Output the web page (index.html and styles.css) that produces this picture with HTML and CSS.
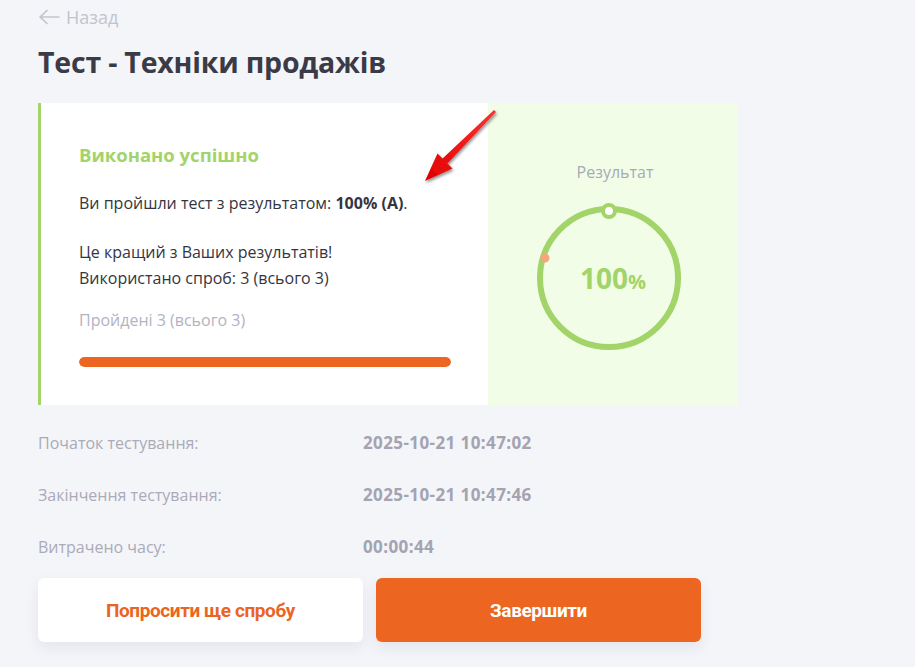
FILE: index.html
```html
<!DOCTYPE html>
<html lang="uk">
<head>
<meta charset="utf-8">
<title>Тест - Техніки продажів</title>
<link rel="stylesheet" href="styles.css">
</head>
<body>
<div class="page">
  <a class="back" href="#">
    <svg class="back-icon" width="22" height="16" viewBox="0 0 22 16"><path d="M9 1.5 L2 8 L9 14.5 M2 8 H21" fill="none" stroke="#c3c3cf" stroke-width="1.7" stroke-linecap="round" stroke-linejoin="round"/></svg>
    <span>Назад</span>
  </a>
  <h1 class="title">Тест - Техніки продажів</h1>

  <div class="card">
    <div class="card-main">
      <div class="status">Виконано успішно</div>
      <p class="line">Ви пройшли тест з результатом: <b>100% (A)</b>.</p>
      <p class="line best">Це кращий з Ваших результатів!<br>Використано спроб: 3 (всього 3)</p>
      <p class="passed">Пройдені 3 (всього 3)</p>
      <div class="bar"><div class="bar-fill" style="width:100%"></div></div>
    </div>
    <div class="card-side">
      <div class="side-label">Результат</div>
      <div class="ring">
        <svg width="160" height="160" viewBox="0 0 160 160">
          <circle cx="80" cy="80" r="69" fill="none" stroke="#a2d469" stroke-width="6"/>
          <circle cx="80" cy="13" r="6" fill="#fff" stroke="#a2d469" stroke-width="4"/>
          <circle cx="16" cy="60" r="4.5" fill="#f7a47f"/>
        </svg>
        <div class="ring-value">100<span class="pct">%</span></div>
      </div>
    </div>
    <svg class="arrow" width="90" height="90" viewBox="0 0 90 90">
      <defs>
        <filter id="sh" x="-30%" y="-30%" width="160%" height="160%">
          <feDropShadow dx="1" dy="2" stdDeviation="1.6" flood-color="#000" flood-opacity="0.45"/>
        </filter>
        <linearGradient id="rg" x1="0" y1="1" x2="1" y2="0">
          <stop offset="0" stop-color="#e00000"/>
          <stop offset="1" stop-color="#ff3030"/>
        </linearGradient>
      </defs>
      <path d="M7 76 L19.5 48.5 L24.6 53.6 L76 5 L78 7 L29.4 58.4 L34.5 63.5 Z" fill="url(#rg)" filter="url(#sh)"/>
    </svg>
  </div>

  <div class="info">
    <div class="info-row"><span class="info-label">Початок тестування:</span><span class="info-value">2025-10-21 10:47:02</span></div>
    <div class="info-row"><span class="info-label">Закінчення тестування:</span><span class="info-value">2025-10-21 10:47:46</span></div>
    <div class="info-row"><span class="info-label">Витрачено часу:</span><span class="info-value">00:00:44</span></div>
  </div>

  <div class="actions">
    <button class="btn btn-light">Попросити ще спробу</button>
    <button class="btn btn-primary">Завершити</button>
  </div>
</div>
</body>
</html>
```
FILE: styles.css
```css
* { box-sizing: border-box; }
html, body { margin: 0; padding: 0; }
body {
  background: #f4f5f9;
  font-family: "Open Sans", "Noto Sans", sans-serif;
  color: #3a3a48;
  height: 667px;
  overflow: hidden;
}
.page {
  padding: 4px 0 0 38px;
  width: 738px;
}
.back {
  display: flex;
  align-items: center;
  gap: 6px;
  color: #c3c3cf;
  text-decoration: none;
  font-size: 18px;
  height: 26px;
}
.title {
  margin: 15px 0 0 0;
  font-size: 28.5px;
  font-weight: 700;
  color: #3b3b47;
  line-height: 34px;
  letter-spacing: -0.2px;
}
.card {
  position: relative;
  margin-top: 24px;
  width: 700px;
  height: 302px;
  display: flex;
}
.card-main {
  width: 450px;
  background: #fff;
  border-left: 3px solid #a2d469;
  padding: 38px 37px 0 38px;
}
.status {
  color: #a2d469;
  font-weight: 700;
  font-size: 18.5px;
  line-height: 28px;
}
.line {
  margin: 21px 0 0 0;
  font-size: 16px;
  line-height: 26px;
  color: #35353f;
}
.line b { font-weight: 700; }
.best { margin-top: 23px; }
.passed {
  margin: 16px 0 0 0;
  font-size: 16px;
  line-height: 26px;
  color: #b3b3c1;
}
.bar {
  margin-top: 24px;
  width: 372px;
  height: 10px;
  border-radius: 5px;
  background: #f1f1f4;
  overflow: hidden;
}
.bar-fill {
  height: 100%;
  background: #ec6521;
  border-radius: 5px;
}
.card-side {
  flex: 1;
  background: #f1fde7;
  display: flex;
  flex-direction: column;
  align-items: center;
  padding-top: 57px;
}
.side-label {
  color: #a9a9b6;
  font-size: 16px;
  line-height: 24px;
  margin-left: 4px;
}
.ring {
  position: relative;
  width: 160px;
  height: 160px;
  margin-top: 14px;
  margin-left: -8px;
}
.ring svg { display: block; }
.ring-value {
  position: absolute;
  inset: 0;
  display: flex;
  align-items: center;
  justify-content: center;
  color: #a2d469;
  font-weight: 700;
  font-size: 28px;
  padding-left: 8px;
  padding-top: 0;
}
.pct { font-size: 20px; margin-top: 6px; }
.arrow {
  position: absolute;
  left: 380px;
  top: 2px;
}
.info {
  margin-top: 25px;
  display: flex;
  flex-direction: column;
  gap: 26px;
}
.info-row {
  display: flex;
  align-items: baseline;
  font-size: 16px;
  line-height: 26px;
}
.info-label {
  width: 325px;
  color: #aaaab8;
}
.info-value {
  color: #a3a3b1;
  font-weight: 700;
  font-size: 17px;
  letter-spacing: 0.4px;
}
.actions {
  margin-top: 18px;
  display: flex;
  gap: 13px;
}
.btn {
  width: 325px;
  height: 64px;
  border: none;
  border-radius: 6px;
  font-family: "Roboto", sans-serif;
  font-weight: 700;
  font-size: 19px;
  letter-spacing: -0.4px;
  cursor: pointer;
  box-shadow: 0 6px 14px rgba(40, 50, 90, 0.08);
}
.btn-light { background: #fff; color: #eb6421; }
.btn-primary { background: #ec6521; color: #fff; }
```
